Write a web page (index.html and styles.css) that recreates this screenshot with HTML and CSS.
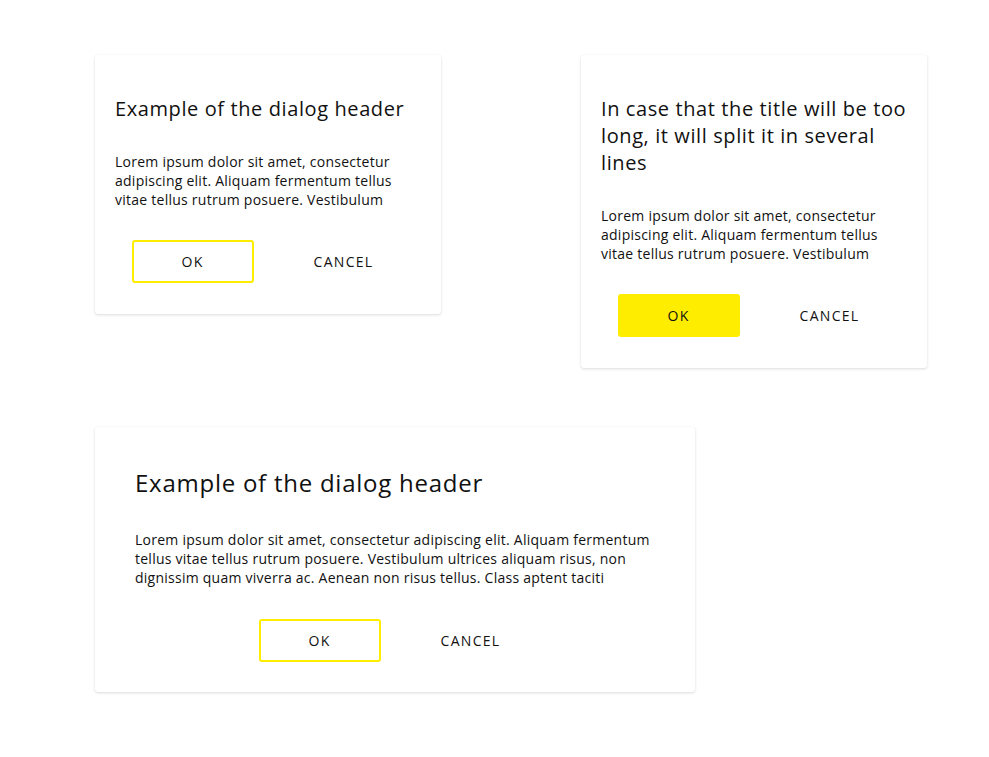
FILE: index.html
```html
<!DOCTYPE html>
<html lang="en">
<head>
<meta charset="utf-8">
<title>Dialogs</title>
<link rel="stylesheet" href="styles.css">
</head>
<body>
<main class="page">
  <div class="row">
    <section class="dialog">
      <h2 class="dialog-title">Example of the dialog header</h2>
      <p class="dialog-text">Lorem ipsum dolor sit amet, consectetur adipiscing elit. Aliquam fermentum tellus vitae tellus rutrum posuere. Vestibulum</p>
      <div class="dialog-actions">
        <button class="btn btn-outline">OK</button>
        <button class="btn btn-text">CANCEL</button>
      </div>
    </section>
    <section class="dialog">
      <h2 class="dialog-title">In case that the title will be too long, it will split it in several lines</h2>
      <p class="dialog-text">Lorem ipsum dolor sit amet, consectetur adipiscing elit. Aliquam fermentum tellus vitae tellus rutrum posuere. Vestibulum</p>
      <div class="dialog-actions">
        <button class="btn btn-filled">OK</button>
        <button class="btn btn-text">CANCEL</button>
      </div>
    </section>
  </div>
  <section class="dialog dialog-wide">
    <h2 class="dialog-title">Example of the dialog header</h2>
    <p class="dialog-text">Lorem ipsum dolor sit amet, consectetur adipiscing elit. Aliquam fermentum tellus vitae tellus rutrum posuere. Vestibulum ultrices aliquam risus, non dignissim quam viverra ac. Aenean non risus tellus. Class aptent taciti</p>
    <div class="dialog-actions">
      <button class="btn btn-outline">OK</button>
      <button class="btn btn-text">CANCEL</button>
    </div>
  </section>
</main>
</body>
</html>
```

FILE: styles.css
```css
* { box-sizing: border-box; }
html, body { margin: 0; padding: 0; background: #ffffff; }
body {
  font-family: "Open Sans", "Noto Sans", sans-serif;
  color: #111111;
}
.page {
  padding: 55px 0 60px 95px;
  display: flex;
  flex-direction: column;
  align-items: flex-start;
  gap: 59px;
}
.row {
  display: flex;
  align-items: flex-start;
  gap: 140px;
}
.dialog {
  width: 346px;
  background: #fff;
  border-radius: 3px;
  box-shadow: 0 1px 3px rgba(0, 0, 0, 0.14), 0 0 1px rgba(0, 0, 0, 0.06);
  padding: 40px 20px 31px;
}
.dialog-title {
  margin: 0;
  font-size: 20px;
  line-height: 27px;
  font-weight: 400;
  letter-spacing: 0.6px;
}
.dialog-text {
  margin: 30px 0 0;
  font-size: 14px;
  line-height: 19px;
  font-weight: 400;
  letter-spacing: 0.25px;
}
.dialog-actions {
  margin-top: 31px;
  display: flex;
  justify-content: center;
  gap: 29px;
}
.btn {
  width: 122px;
  height: 43px;
  font-family: inherit;
  font-size: 14px;
  letter-spacing: 1.3px;
  color: #111;
  background: transparent;
  border: 2px solid transparent;
  border-radius: 3px;
  padding: 0;
  cursor: pointer;
}
.btn-outline { border-color: #ffed00; }
.btn-filled { background: #ffed00; border-color: #ffed00; }
.dialog-wide {
  width: 600px;
  padding: 40px 40px 30px;
}
.dialog-wide .dialog-title {
  font-size: 24px;
  line-height: 32px;
  letter-spacing: 0.75px;
}
.dialog-wide .dialog-text { margin-top: 31px; }
.dialog-wide .dialog-actions { margin-top: 32px; }
```
